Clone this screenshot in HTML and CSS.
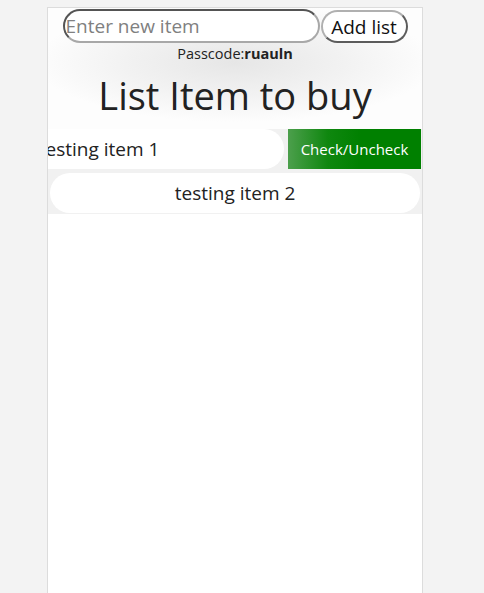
FILE: index.html
```html
<!DOCTYPE html>
<html>
<head>
<meta charset="utf-8">
<link rel="stylesheet" href="styles.css">
</head>
<body>
<div class="app">
  <header class="top">
    <form class="add-form">
      <input class="new-item" type="text" placeholder="Enter new item">
      <button class="add-btn" type="button">Add list</button>
    </form>
    <div class="passcode">Passcode:<b>ruauln</b></div>
    <h1 class="title">List Item to buy</h1>
  </header>
  <ul class="list">
    <li class="row">
      <div class="item">testing item 1</div>
      <button class="check-btn" type="button">Check/Uncheck</button>
    </li>
    <li class="row single">
      <div class="item">testing item 2</div>
    </li>
  </ul>
</div>
</body>
</html>
```
FILE: styles.css
```css
html, body {
  margin: 0;
  padding: 0;
  background: #f3f3f3;
  height: 100%;
}
body {
  padding: 7px 0 0 47px;
  box-sizing: border-box;
  font-family: "Open Sans", "Noto Sans", sans-serif;
  color: #222;
}
.app {
  width: 376px;
  box-sizing: border-box;
  min-height: 600px;
  background: #fff;
  border: 1px solid #dcdcdc;
  border-bottom: none;
  overflow: hidden;
}
.top {
  background: radial-gradient(ellipse 200px 60px at 50% 45%, #e6e6e6 0%, #f2f2f2 55%, #fdfdfd 100%);
  padding-top: 1px;
  padding-bottom: 11px;
}
.add-form {
  display: flex;
  justify-content: center;
  align-items: flex-start;
  gap: 1px;
  margin: 0;
}
.new-item {
  width: 257px;
  height: 34px;
  box-sizing: border-box;
  border-radius: 17px;
  border: 2px inset #a8a8a8;
  padding: 0 1px;
  font-family: inherit;
  font-size: 19px;
  background: #fff;
  outline: none;
}
.new-item::placeholder {
  color: #808080;
}
.add-btn {
  margin-top: 1px;
  width: 87px;
  height: 33px;
  box-sizing: border-box;
  border-radius: 17px;
  border: 2px outset #b0b0b0;
  background: #fff;
  font-family: inherit;
  font-size: 19px;
  color: #111;
  padding: 0;
}
.passcode {
  text-align: center;
  font-size: 14.5px;
  line-height: 18px;
  margin-top: 2px;
}
.title {
  margin: 9px 0 0;
  text-align: center;
  font-weight: 400;
  font-size: 38px;
  line-height: 46px;
}
.list {
  list-style: none;
  margin: 0;
  padding: 0;
  background: #f1f1f1;
  display: flex;
  flex-direction: column;
  gap: 4px;
  padding-bottom: 1px;
}
.row {
  display: flex;
  justify-content: flex-end;
  gap: 4px;
  padding-right: 1px;
  height: 40px;
}
.row.single {
  justify-content: center;
  padding-right: 0;
}
.item {
  flex: 0 0 370px;
  height: 40px;
  background: #fff;
  border-radius: 20px;
  text-align: center;
  font-size: 19px;
  line-height: 40px;
}
.check-btn {
  flex: 0 0 133px;
  height: 40px;
  border: none;
  color: #fff;
  font-family: inherit;
  font-size: 15px;
  background: linear-gradient(to right, #4c9f4c 0%, #0f870f 30%, #008000 55%);
  padding: 0;
}
```
